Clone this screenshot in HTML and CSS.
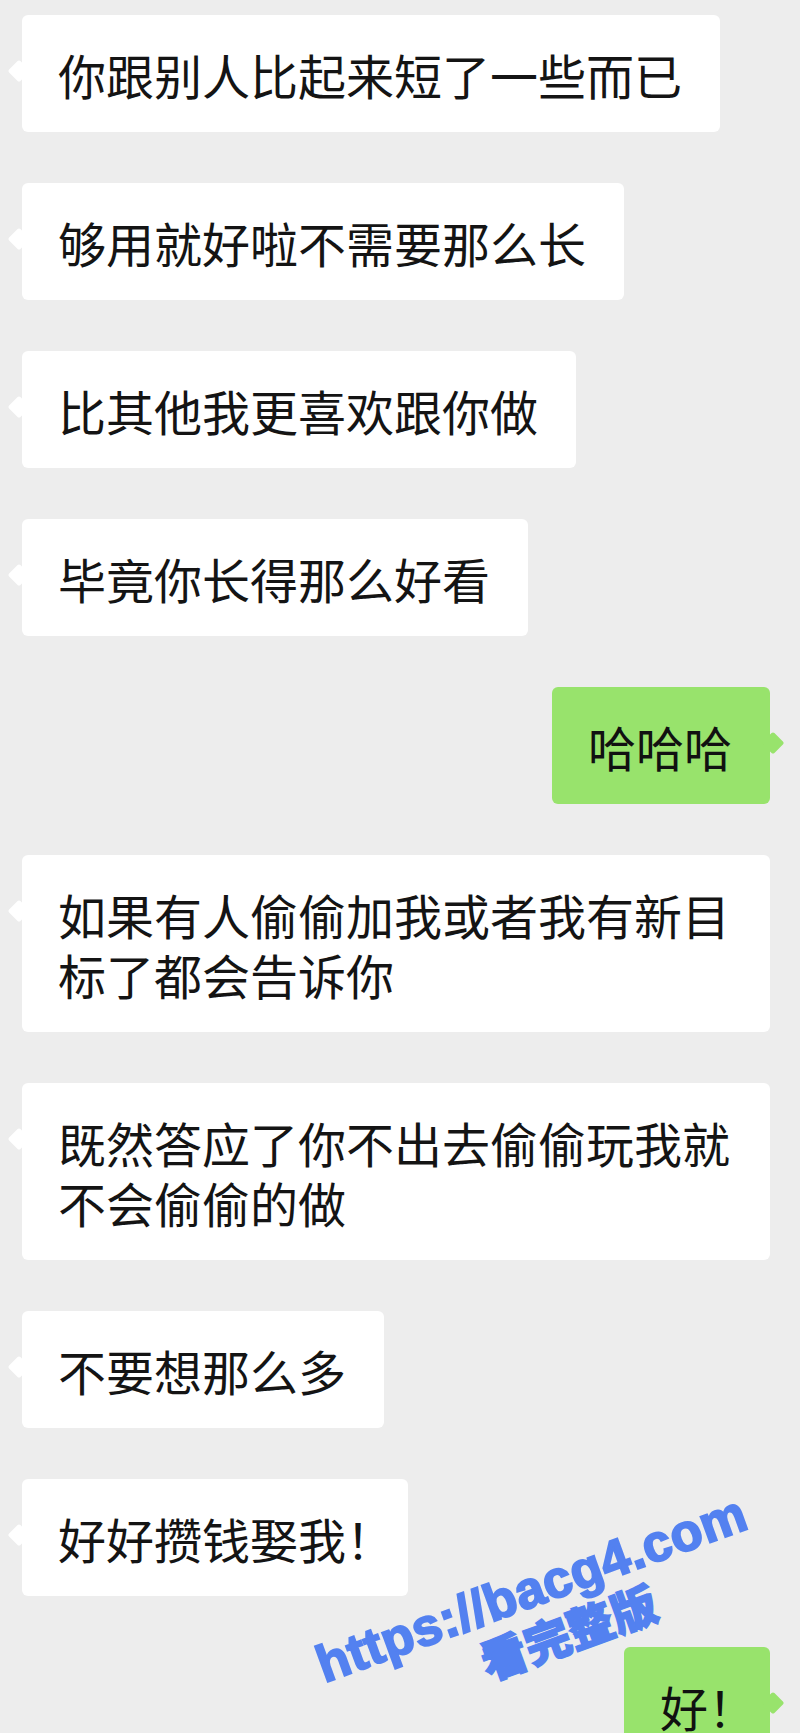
FILE: index.html
```html
<!DOCTYPE html>
<html lang="zh-CN">
<head>
<meta charset="utf-8">
<title>聊天记录</title>
<link rel="stylesheet" href="styles.css">
</head>
<body>
<div class="chat">
  <div class="row left"><div class="bubble">你跟别人比起来短了一些而已</div></div>
  <div class="row left"><div class="bubble">够用就好啦不需要那么长</div></div>
  <div class="row left"><div class="bubble">比其他我更喜欢跟你做</div></div>
  <div class="row left"><div class="bubble">毕竟你长得那么好看</div></div>
  <div class="row right"><div class="bubble green">哈哈哈</div></div>
  <div class="row left"><div class="bubble">如果有人偷偷加我或者我有新目标了都会告诉你</div></div>
  <div class="row left"><div class="bubble">既然答应了你不出去偷偷玩我就不会偷偷的做</div></div>
  <div class="row left"><div class="bubble">不要想那么多</div></div>
  <div class="row left"><div class="bubble">好好攒钱娶我！</div></div>
  <div class="row right"><div class="bubble green">好！</div></div>
</div>
<div class="watermark">
  <div class="wm-url">https://bacg4.com</div>
  <div class="wm-cn">看完整版</div>
</div>
</body>
</html>
```
FILE: styles.css
```css
html, body {
  margin: 0;
  padding: 0;
}
body {
  background: #ededed;
  font-family: "Noto Sans CJK SC", "Noto Sans", sans-serif;
  height: 1733px;
  overflow: hidden;
  position: relative;
}
.chat {
  display: flex;
  flex-direction: column;
  gap: 51px;
  padding: 15px 30px 0 22px;
}
.row {
  display: flex;
}
.row.right {
  justify-content: flex-end;
}
.bubble {
  position: relative;
  box-sizing: border-box;
  max-width: 748px;
  background: #ffffff;
  color: #141414;
  border-radius: 6px;
  padding: 28.5px 38px 28.5px 36px;
  font-size: 48px;
  line-height: 60px;
  font-feature-settings: "halt";
}
.bubble::before {
  content: "";
  position: absolute;
  top: 48px;
  left: -11px;
  width: 16px;
  height: 16px;
  background: inherit;
  border-radius: 2px;
  transform: rotate(45deg);
}
.bubble.green {
  background: #98e36c;
  color: #111;
}
.bubble.green::before {
  left: auto;
  right: -11px;
}
.watermark {
  position: absolute;
  left: 280px;
  top: 1560px;
  width: 520px;
  text-align: center;
  color: #5381f0;
  transform: rotate(-20deg);
  transform-origin: center;
}
.wm-url {
  font-family: "Liberation Sans", Arial, sans-serif;
  font-weight: 700;
  font-size: 52px;
  line-height: 54px;
  -webkit-text-stroke: 2px #5381f0;
  letter-spacing: 0.5px;
}
.wm-cn {
  font-family: "Noto Sans CJK SC", sans-serif;
  font-weight: 900;
  font-size: 46px;
  line-height: 50px;
  -webkit-text-stroke: 1.5px #5381f0;
  padding-left: 40px;
}
```
